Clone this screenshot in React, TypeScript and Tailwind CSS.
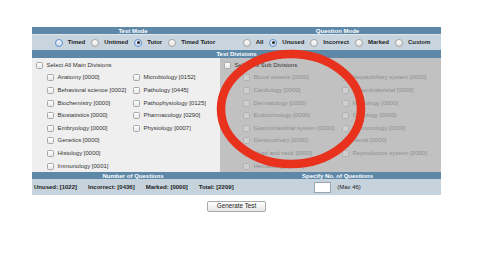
import React from "react";

const leftMain = [
  "Anatomy [0000]",
  "Behavioral science [0002]",
  "Biochemistry [0000]",
  "Biostatistics [0000]",
  "Embryology [0000]",
  "Genetics [0000]",
  "Histology [0000]",
  "Immunology [0001]",
];
const rightMain = [
  "Microbiology [0152]",
  "Pathology [0445]",
  "Pathophysiology [0125]",
  "Pharmacology [0290]",
  "Physiology [0007]",
];
const leftSub = [
  "Blood vessels [0000]",
  "Cardiology [0000]",
  "Dermatology [0000]",
  "Endocrinology [0000]",
  "Gastrointestinal system [0000]",
  "Genitourinary [0000]",
  "Head and neck [0000]",
  "Hematology [0000]",
];
const rightSub = [
  "Hepatobiliary system [0000]",
  "Musculoskeletal [0000]",
  "Neurology [0000]",
  "Oncology [0000]",
  "Pulmonology [0000]",
  "Renal [0000]",
  "Reproductive system [0000]",
];

const Radio = ({ checked, focus, label }: { checked?: boolean; focus?: boolean; label: string }) => (
  <label className="flex items-center gap-[5px]">
    <span
      className={
        "w-[8px] h-[8px] rounded-full border flex items-center justify-center bg-gradient-to-b " +
        (checked || focus
          ? "border-[#5d8fcf] from-[#eef4fb] to-[#c9daf0]"
          : "border-[#a3a3a3] from-white to-[#e2e2e2]")
      }
    >
      {checked && <span className="w-[3px] h-[3px] rounded-full bg-[#2a2a2a]" />}
    </span>
    <span className="text-[6px] font-bold text-[#222]">{label}</span>
  </label>
);

const Check = ({ label, disabled }: { label: string; disabled?: boolean }) => (
  <div className="h-[12.6px] flex items-center gap-[3.5px]">
    <span
      className={
        "w-[7px] h-[7px] rounded-[1.5px] border " +
        (disabled ? "border-[#b0b0b0] bg-[#cfcfcf]" : "border-[#a8a8a8] bg-gradient-to-b from-white to-[#e8e8e8]")
      }
    />
    <span className={"text-[6px] whitespace-nowrap " + (disabled ? "text-[#8f8f8f]" : "text-[#333]")}>
      {label}
    </span>
  </div>
);

const Header = ({ children }: { children: React.ReactNode }) => (
  <div className="flex items-center justify-center text-[6px] font-bold text-white leading-none">
    {children}
  </div>
);

export default function App() {
  return (
    <div className="relative w-[500px] h-[255px] bg-white font-['Liberation_Sans',Arial,sans-serif] overflow-hidden">
      <div className="pt-[27px] pl-[32px] w-[441px]">
        <div className="w-[409px]">
          <div className="grid grid-cols-[202px_207px] h-[7px] bg-[#5e88a8]">
            <Header>Test Mode</Header>
            <Header>Question Mode</Header>
          </div>
          <div className="grid grid-cols-[202px_207px] h-[16px] bg-[#c8d5de] border-t border-[#dfe7ec]">
            <div className="flex items-center justify-center gap-[6px] pl-[4px]">
              <Radio focus label="Timed" />
              <Radio label="Untimed" />
              <Radio checked label="Tutor" />
              <Radio label="Timed Tutor" />
            </div>
            <div className="flex items-center justify-center gap-[6px] pr-[2px]">
              <Radio label="All" />
              <Radio checked label="Unused" />
              <Radio label="Incorrect" />
              <Radio label="Marked" />
              <Radio label="Custom" />
            </div>
          </div>
          <div className="h-[8px] bg-[#5e88a8] flex items-center justify-center text-[6px] font-bold text-white">
            Test Divisions
          </div>
          <div className="grid grid-cols-[188px_221px] h-[114px]">
            <div className="bg-[#efefef] pl-[4px] pt-[1px]">
              <Check label="Select All Main Divisions" />
              <div className="flex pl-[11px]">
                <div className="w-[86px]">
                  {leftMain.map((l) => (
                    <Check key={l} label={l} />
                  ))}
                </div>
                <div>
                  {rightMain.map((l) => (
                    <Check key={l} label={l} />
                  ))}
                </div>
              </div>
            </div>
            <div className="bg-[#c1c1c1] pl-[4px] pt-[1px]">
              <Check label="Select All Sub Divisions" />
              <div className="flex pl-[19px]">
                <div className="w-[99px]">
                  {leftSub.map((l) => (
                    <Check key={l} label={l} disabled />
                  ))}
                </div>
                <div>
                  {rightSub.map((l) => (
                    <Check key={l} label={l} disabled />
                  ))}
                </div>
              </div>
            </div>
          </div>
          <div className="grid grid-cols-[202px_207px] h-[7px] bg-[#5e88a8]">
            <Header>Number of Questions</Header>
            <Header>Specify No. of Questions</Header>
          </div>
          <div className="grid grid-cols-[202px_207px] h-[16px] bg-[#c6d3dc]">
            <div className="flex items-center gap-[11px] pl-[2px] text-[6px] font-bold text-[#222] whitespace-nowrap">
              <span>Unused: [1022]</span>
              <span>Incorrect: [0436]</span>
              <span>Marked: [0000]</span>
              <span>Total: [2209]</span>
            </div>
            <div className="flex items-center justify-center gap-[6px]">
              <input className="w-[17px] h-[11px] bg-white border border-[#9aa5ad] outline-none" />
              <span className="text-[6px] text-[#222]">(Max 46)</span>
            </div>
          </div>
        </div>
        <div className="w-[409px] flex justify-center mt-[6px]">
          <button className="w-[59px] h-[11px] rounded-[2px] border border-[#a9a9a9] bg-gradient-to-b from-white to-[#e6e6e6] text-[6.3px] text-[#222] leading-none">
            Generate Test
          </button>
        </div>
      </div>
      <svg className="absolute left-0 top-0 pointer-events-none" width="500" height="255">
        <ellipse cx="291" cy="109" rx="70" ry="55" fill="none" stroke="#e8321e" strokeWidth="8.5" />
      </svg>
    </div>
  );
}
